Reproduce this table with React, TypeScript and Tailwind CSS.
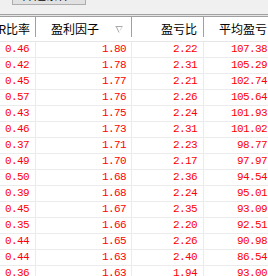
import React from "react";

const rows: [string, string, string, string][] = [
  ["0.46", "1.80", "2.22", "107.38"],
  ["0.42", "1.78", "2.31", "105.29"],
  ["0.45", "1.77", "2.21", "102.74"],
  ["0.57", "1.76", "2.26", "105.64"],
  ["0.43", "1.75", "2.24", "101.93"],
  ["0.46", "1.73", "2.31", "101.02"],
  ["0.37", "1.71", "2.23", "98.77"],
  ["0.49", "1.70", "2.17", "97.97"],
  ["0.50", "1.68", "2.36", "94.54"],
  ["0.39", "1.68", "2.24", "95.01"],
  ["0.45", "1.67", "2.35", "93.09"],
  ["0.35", "1.66", "2.20", "92.51"],
  ["0.44", "1.65", "2.26", "90.98"],
  ["0.44", "1.63", "2.40", "86.54"],
  ["0.36", "1.63", "1.94", "93.00"],
];

const SortIcon = () => (
  <svg width="8" height="7" viewBox="0 0 8 7" className="shrink-0">
    <path d="M0.5 0.5 H7.5" stroke="#a8a8a8" strokeWidth="1" />
    <path d="M1.5 1 L4 6.5" stroke="#a8a8a8" strokeWidth="1" />
    <path d="M7 1 L5 4.5" stroke="#d8d8d8" strokeWidth="1" />
  </svg>
);

const HeadDivider = () => <div className="w-px h-[20px] bg-[#a0a0a0] shrink-0" />;

export default function App() {
  return (
    <div className="w-[268px] h-[276px] overflow-hidden bg-white font-['Noto_Sans_CJK_SC','Noto_Sans',sans-serif] text-[12px] text-black">
      {/* toolbar strip above the grid */}
      <div className="h-[14px] bg-[#f0f0f0] flex items-start overflow-hidden">
        <div className="ml-[12px] -mt-[19px] w-[74px] h-[24px] border border-[#adadad] bg-[#e1e1e1] flex items-end pl-[9px] leading-[12px] overflow-hidden">
          <span className="-translate-y-[3px]">筛选条件</span>
        </div>
      </div>
      <div className="h-px bg-[#a0a0a0]" />
      <div className="h-px bg-[#e6e6e6]" />
      <div className="h-px bg-[#a0a0a0]" />

      {/* header */}
      <div className="flex h-[25px] border-b border-[#e6e6e6]">
        <div className="w-[35px] shrink-0 flex items-center justify-end pr-[5px] overflow-hidden whitespace-nowrap">
          R比率
        </div>
        <HeadDivider />
        <div className="w-[95px] shrink-0 flex items-center justify-end pr-[8px] gap-[16px] whitespace-nowrap">
          <span>盈利因子</span>
          <SortIcon />
        </div>
        <HeadDivider />
        <div className="w-[71px] shrink-0 flex items-center justify-end pr-[6px] whitespace-nowrap">
          盈亏比
        </div>
        <HeadDivider />
        <div className="w-[67px] shrink-0 flex items-center justify-end pr-[4px] whitespace-nowrap">
          平均盈亏
        </div>
      </div>

      {/* body */}
      <div className="font-['Liberation_Mono',monospace] text-[11px] tracking-[-0.6px] text-[#ff0000]">
        {rows.map((r, i) => (
          <div key={i} className="flex h-[16px] border-b border-[#ebebeb]">
            <div className="w-[36px] shrink-0 border-r border-[#ebebeb] flex items-center justify-end pr-[6px]">
              {r[0]}
            </div>
            <div className="w-[96px] shrink-0 border-r border-[#ebebeb] flex items-center justify-end pr-[5px]">
              {r[1]}
            </div>
            <div className="w-[72px] shrink-0 border-r border-[#ebebeb] flex items-center justify-end pr-[6px]">
              {r[2]}
            </div>
            <div className="w-[68px] shrink-0 flex items-center justify-end pr-[5px]">
              {r[3]}
            </div>
          </div>
        ))}
      </div>
    </div>
  );
}
